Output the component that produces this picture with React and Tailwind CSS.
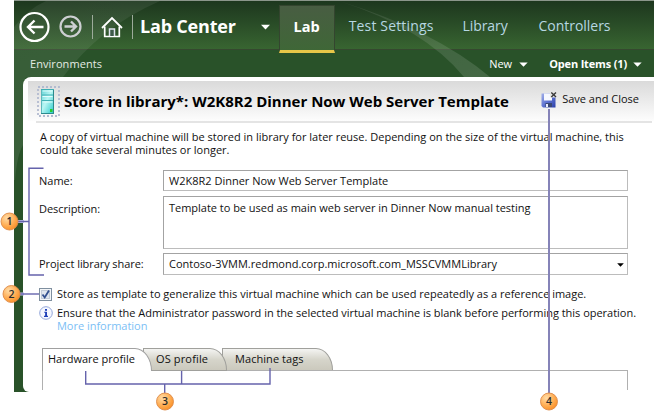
function Caret({ className = "" }) {
  return (
    <svg viewBox="0 0 10 6" className={"shrink-0 " + className}>
      <path d="M0 .5H10L5 5.800Z" fill="currentColor" />
    </svg>
  );
}

function BackIcon() {
  return (
    <svg width="32" height="32" viewBox="0 0 32 32" fill="none" stroke="#fff" className="ml-[5px] shrink-0">
      <circle cx="15.500" cy="16" r="14" strokeWidth="2.200" />
      <path d="M24.500 16H9M15.500 9.500L9 16L15.500 22.500" strokeWidth="2.400" />
    </svg>
  );
}

function ForwardIcon() {
  return (
    <svg width="24" height="24" viewBox="0 0 24 24" fill="none" stroke="#cdcfd2" className="ml-[7px] shrink-0">
      <circle cx="12.500" cy="11.500" r="10" strokeWidth="2.200" />
      <path d="M6.500 11.500H18M13 6.500L18 11.500L13 16.500" strokeWidth="2.400" />
    </svg>
  );
}

function HomeIcon() {
  return (
    <svg width="22" height="22" viewBox="0 0 22 22" fill="none" className="ml-[8px] shrink-0">
      <path d="M1 12L11 2L21 12" stroke="#fff" strokeWidth="1.800" />
      <path d="M3.700 10.500V20.500H18.300V10.500" stroke="#fff" strokeWidth="1.700" />
      <path d="M8.500 20V13H13.500V20" fill="#3e5a4a" stroke="#dfe3ee" strokeWidth="1.500" />
    </svg>
  );
}

function ServerIcon() {
  return (
    <svg width="23" height="32" viewBox="0 0 23 32" className="shrink-0">
      <defs>
        <linearGradient id="srv" x1="0" y1="0" x2="1" y2="1">
          <stop offset="0" stopColor="#62d3d4" />
          <stop offset="0.450" stopColor="#b9f6f4" />
          <stop offset="1" stopColor="#2ccacb" />
        </linearGradient>
      </defs>
      <rect x="1" y="2" width="21" height="29" fill="none" stroke="#b3bbd0" strokeWidth="1.800" strokeDasharray="2 2" />
      <rect x="4.500" y="4.500" width="12" height="24" fill="url(#srv)" stroke="#5cb9bc" />
      <path d="M4 4.500H17M5 10H16M5 15.500H16" stroke="#3fb0b4" strokeWidth="1" />
      <path d="M5.500 6H15.500M5.500 11.500H15.500M5.500 17H15.500" stroke="#e2fffe" strokeWidth="1" />
      <path d="M4 28.500H17M16.500 5V28" stroke="#2c8a8e" strokeWidth="1" />
      <rect x="13" y="24" width="2.500" height="3" fill="#27cf2d" />
    </svg>
  );
}

function SaveCloseIcon() {
  return (
    <svg width="16" height="16" viewBox="0 0 16 16" className="shrink-0">
      <defs>
        <linearGradient id="disk" x1="0" y1="0" x2="1" y2="1">
          <stop offset="0" stopColor="#a3b0ea" />
          <stop offset="0.500" stopColor="#5f74d2" />
          <stop offset="1" stopColor="#2a3ea8" />
        </linearGradient>
      </defs>
      <path d="M.5 1.500H14.500V15.500H2L.5 14Z" fill="url(#disk)" />
      <rect x="3" y="1.500" width="8" height="7" fill="#f6f8ff" />
      <rect x="4.500" y="11" width="6.500" height="4" fill="#3a4874" />
      <rect x="5" y="12" width="2" height="3" fill="#e8ecff" />
      <rect x="9" y="0" width="7" height="5.500" fill="#e6e6e6" />
      <path d="M10.300 .5L15 5M15 .5L10.300 5" stroke="#3a3a3a" strokeWidth="1.400" />
    </svg>
  );
}

function InfoIcon() {
  return (
    <svg width="14" height="14" viewBox="0 0 14 14" className="shrink-0">
      <circle cx="7" cy="7" r="6.300" fill="#f4f7ff" stroke="#93a6da" strokeWidth="1" />
      <rect x="6" y="3" width="2" height="1.800" fill="#1f3fb8" />
      <path d="M5.200 6.300H7.100V10.500M5 10.400H9" fill="none" stroke="#1f3fb8" strokeWidth="1.100" />
      <path d="M7.100 6V10.500" stroke="#1f3fb8" strokeWidth="1.800" />
    </svg>
  );
}

function HeaderSweep() {
  return (
    <svg width="640" height="392" viewBox="0 0 640 392" className="absolute top-0 left-0">
      <defs>
        <linearGradient id="glow" x1="0" y1="0" x2="0.300" y2="1">
          <stop offset="0" stopColor="#fff" stopOpacity="0.060" />
          <stop offset="1" stopColor="#fff" stopOpacity="0.090" />
        </linearGradient>
        <linearGradient id="ray" x1="0" y1="0" x2="1" y2="1">
          <stop offset="0" stopColor="#fff" stopOpacity="0.080" />
          <stop offset="1" stopColor="#fff" stopOpacity="0.130" />
        </linearGradient>
      </defs>
      <path d="M0 27Q14 9 32 1H146Q86 27 49 77H14Q9 78 9 84V145Q3 155 1 180H0Z" fill="url(#glow)" />
      <path d="M325 1Q420 30 476 77H450Q410 28 325 1Z" fill="url(#ray)" />
    </svg>
  );
}

function Callouts() {
  const dots = [
    [9.5, 221.5, 1],
    [11.5, 294, 2],
    [165, 401.5, 3],
    [549, 401.5, 4],
  ];
  return (
    <svg width="655" height="411" viewBox="0 0 655 411" className="pointer-events-none absolute top-0 left-0">
      <defs>
        <radialGradient id="ball" cx="0.350" cy="0.300" r="0.800">
          <stop offset="0" stopColor="#ffdca8" />
          <stop offset="0.550" stopColor="#ffae55" />
          <stop offset="1" stopColor="#f98a1e" />
        </radialGradient>
      </defs>
      <path d="M17 221.500H24" stroke="#b9bbe6" strokeWidth="3" />
      <path d="M18 294H24" stroke="#b9bbe6" strokeWidth="3" />
      <g fill="none" stroke="#6563ac" strokeWidth="1.400">
        <path d="M43.500 168.300H29V275H44M18 221.500H29" />
        <path d="M20 294H39" />
        <path d="M85.700 369V384H270V368M181.600 368V384M164.700 384V394" />
      </g>
      <path d="M549 109V394" stroke="#8583b8" strokeWidth="2" />
      {dots.map(([x, y, n]) => (
        <g key={n}>
          <circle cx={x} cy={y} r="8.500" fill="url(#ball)" stroke="#dd8a48" strokeWidth="0.900" />
          <text x={x} y={y + 3.8} textAnchor="middle" fontSize="10.500" fontWeight="600" fill="#2b2b2b">
            {n}
          </text>
        </g>
      ))}
    </svg>
  );
}

const field = "ml-auto w-[465px] border border-[#a3a3a3] border-r-[#bcbcbc] border-b-[#bcbcbc] bg-white pl-[5px]";

export default function App() {
  return (
    <div className="relative h-[411px] w-[655px] overflow-hidden bg-white font-['Open_Sans','Noto_Sans',sans-serif] text-[11px] leading-[13px] tracking-[0px] whitespace-nowrap text-[#111]">
      <div className="relative ml-[14px] h-[392px] w-[640px] bg-[#295229]">
        <header className="flex h-[50px] items-center border-t border-b border-t-[#8b968b] border-b-[#35482f] bg-linear-to-b from-[#1d371e] to-[#386531] text-white">
          <HeaderSweep />
          <div className="z-10 flex items-center pt-[3px]">
            <BackIcon />
            <ForwardIcon />
            <span className="ml-[10px] h-[24px] w-px bg-[#9dab9b]" />
            <HomeIcon />
            <span className="ml-[9px] h-[24px] w-px bg-[#9dab9b]" />
          </div>
          <h1 className="z-10 mt-[2px] ml-[7px] text-[18px] leading-[24px] font-bold tracking-[-0.2px]">Lab Center</h1>
          <Caret className="z-10 mt-[3px] ml-[25px] h-[6px] w-[9px]" />
          <nav className="z-10 flex h-full text-[14px] leading-[20px] text-[#b7d7e2]">
            <a className="mt-[4px] ml-[9px] h-[48px] w-[56px] border-x border-t border-b-[3px] border-x-[#34452f] border-t-[#34452f] border-b-[#e6c648] bg-linear-to-b from-[#485d42] to-[#3f6737] pt-[11px] text-center text-[14.5px] font-bold text-white">
              Lab
            </a>
            <a className="mt-[15px] ml-[14px] tracking-[0.16px]">Test Settings</a>
            <a className="mt-[15px] ml-[29px] tracking-[-0.09px]">Library</a>
            <a className="mt-[15px] ml-[31px] tracking-[-0.03px]">Controllers</a>
          </nav>
        </header>

        <div className="flex h-[27px] items-center text-white">
          <span className="z-10 ml-[16px] tracking-[0.06px] text-[#e4ece4]">Environments</span>
          <span className="z-10 ml-auto">New</span>
          <Caret className="mt-px ml-[7px] h-[5px] w-[9px]" />
          <span className="ml-[21px] font-bold tracking-[-0.16px]">Open Items (1)</span>
          <Caret className="mt-px mr-[12px] ml-[6px] h-[5px] w-[9px]" />
        </div>

        <main className="relative ml-[9px] flex h-[315px] flex-col rounded-tl-[8px] rounded-bl-[6px] bg-white pt-[4px]">
          <div className="ml-[5px] flex h-[40px] items-start bg-linear-to-b from-[#dadada] to-[#fdfdfd] pl-[9px]">
            <div className="pt-[4px]">
              <ServerIcon />
            </div>
            <h2 className="mt-[10px] ml-[4px] text-[15px] leading-[20px] font-bold tracking-[0px] text-black">
              Store in library*: W2K8R2 Dinner Now Web Server Template
            </h2>
            <div className="mt-[11px] ml-auto flex pr-[15px]">
              <SaveCloseIcon />
              <span className="ml-[5px]">Save and Close</span>
            </div>
          </div>
          <div className="mr-[2px] ml-[13px] h-[2px] bg-[#e4e4e4]" />

          <p className="mt-[7px] ml-[17px]">
            A copy of virtual machine will be stored in library for later reuse. Depending on the size of the virtual machine, this
            <br />
            could take several minutes or longer.
          </p>

          <div className="mt-[14px] mr-[26px] ml-[16px] flex flex-col">
            <label className="flex h-[21px]">
              <span className="mt-[4px]">Name:</span>
              <span className={field + " pt-[3px]"}>W2K8R2 Dinner Now Web Server Template</span>
            </label>
            <label className="mt-[5px] flex h-[53px]">
              <span className="mt-[6px] tracking-[-0.05px]">Description:</span>
              <span className={field + " pt-[4px] tracking-[-0.02px]"}>
                Template to be used as main web server in Dinner Now manual testing
              </span>
            </label>
            <label className="mt-[4px] flex h-[22px]">
              <span className="mt-[4px] tracking-[-0.07px]">Project library share:</span>
              <span className={field + " flex pt-[3px]"}>
                Contoso-3VMM.redmond.corp.microsoft.com_MSSCVMMLibrary
                <Caret className="mt-[6px] mr-[3px] ml-auto h-[4px] w-[7px] text-black" />
              </span>
            </label>
          </div>

          <div className="mt-[12px] ml-[16px] flex h-[14px]">
            <svg width="13" height="13" viewBox="0 0 13 13" className="mt-px shrink-0">
              <rect x="0.500" y="0.500" width="12" height="12" fill="#f4f6f8" stroke="#7f8f9f" />
              <rect x="2.500" y="2.500" width="8" height="8" fill="#dfe5ee" stroke="#c3ccd8" />
              <path d="M3.500 6.500L5.700 9.500L10 2.500" fill="none" stroke="#33508f" strokeWidth="1.800" />
            </svg>
            <span className="ml-[5px] tracking-[-0.01px]">
              Store as template to generalize this virtual machine which can be used repeatedly as a reference image.
            </span>
          </div>
          <div className="mt-[5px] ml-[16px] flex">
            <InfoIcon />
            <div className="ml-[4px] tracking-[-0.022px]">
              Ensure that the Administrator password in the selected virtual machine is blank before performing this operation.
              <br />
              <a className="text-[#7cc0f5]">More information</a>
            </div>
          </div>

          <div className="mt-[16px] ml-[19px] flex h-[23px]">
            <div className="z-20 h-[23px] w-[110px] rounded-tr-[17px_23px] border-t border-r border-l border-[#a0a0a0] bg-white pt-[3px] pl-[5px]">
              Hardware profile
            </div>
            <div className="z-10 -ml-[9px] h-[23px] w-[84px] rounded-tr-[17px_22px] border border-[#a0a09c] bg-linear-to-b from-[#f4f4f2] via-[#d6d5cb] to-[#cbc9bd] pt-[3px] pl-[12px] tracking-[0.14px]">
              OS profile
            </div>
            <div className="-ml-[5px] h-[23px] w-[111px] rounded-tr-[17px_22px] border border-[#a0a09c] bg-linear-to-b from-[#f4f4f2] via-[#d6d5cb] to-[#cbc9bd] pt-[3px] pl-[12px] tracking-[0.06px]">
              Machine tags
            </div>
          </div>
          <div className="-mt-[1px] mr-[26px] ml-[19px] flex h-[20px] border-r border-l border-[#b0b0b0]">
            <div className="w-[109px]" />
            <div className="grow border-t border-[#b0b0b0]" />
          </div>
        </main>
      </div>
      <Callouts />
    </div>
  );
}
